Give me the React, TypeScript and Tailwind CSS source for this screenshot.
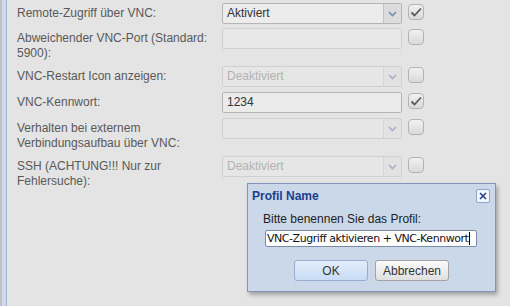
import React from 'react';

type Field =
  | { kind: 'combo'; value?: string; disabled?: boolean }
  | { kind: 'text'; value?: string; disabled?: boolean };

interface RowDef {
  label: string[];
  field: Field;
  checked: boolean;
  h: string;
}

const rows: RowDef[] = [
  { label: ['Remote-Zugriff über VNC:'], field: { kind: 'combo', value: 'Aktiviert' }, checked: true, h: 'h-[25px]' },
  { label: ['Abweichender VNC-Port (Standard:', '5900):'], field: { kind: 'text', disabled: true }, checked: false, h: 'h-[38px]' },
  { label: ['VNC-Restart Icon anzeigen:'], field: { kind: 'combo', value: 'Deaktiviert', disabled: true }, checked: false, h: 'h-[26px]' },
  { label: ['VNC-Kennwort:'], field: { kind: 'text', value: '1234' }, checked: true, h: 'h-[26px]' },
  { label: ['Verhalten bei externem', 'Verbindungsaufbau über VNC:'], field: { kind: 'combo', disabled: true }, checked: false, h: 'h-[38px]' },
  { label: ['SSH (ACHTUNG!!! Nur zur', 'Fehlersuche):'], field: { kind: 'combo', value: 'Deaktiviert', disabled: true }, checked: false, h: 'h-[38px]' },
];

function Chevron({ dim }: { dim?: boolean }) {
  return (
    <svg width="9" height="6" viewBox="0 0 9 6">
      <path d="M1 1l3.5 3.5L8 1" fill="none" stroke={dim ? '#a7b1c3' : '#7a8cb0'} strokeWidth="1.7" />
    </svg>
  );
}

function Checkbox({ checked }: { checked: boolean }) {
  return (
    <div className="w-[16px] h-[16px] rounded-[4px] border border-[#b3b3b3] bg-gradient-to-b from-[#f1f1f1] to-[#dadada] flex items-center justify-center">
      {checked && (
        <svg width="12" height="10" viewBox="0 0 12 10">
          <path d="M1.5 5.5l3 3L11 1.5" fill="none" stroke="#5a5a5a" strokeWidth="1.8" />
        </svg>
      )}
    </div>
  );
}

function Control({ field }: { field: Field }) {
  if (field.kind === 'combo') {
    return (
      <div
        className={`w-[180px] h-[21px] flex border rounded-[2px] ${
          field.disabled ? 'border-[#d0d0d0] bg-[#e6e6e6]' : 'border-[#b5b5b5] bg-[#ececec]'
        }`}
      >
        <div className={`flex-1 px-[4px] leading-[19px] text-[12px] ${field.disabled ? 'text-[#b3b3b3]' : 'text-[#333]'}`}>
          {field.value}
        </div>
        <div
          className={`w-[18px] flex items-center justify-center border-l ${
            field.disabled ? 'border-[#d6d6d6] bg-[#e2e2e2]' : 'border-[#c2c2c2] bg-[#dcdcdc]'
          }`}
        >
          <Chevron dim={field.disabled} />
        </div>
      </div>
    );
  }
  return (
    <div
      className={`w-[180px] h-[21px] border rounded-[2px] px-[4px] leading-[19px] text-[12px] text-[#333] ${
        field.disabled ? 'border-[#d0d0d0] bg-[#e7e7e7]' : 'border-[#b5b5b5] bg-[#ebebeb]'
      }`}
    >
      {field.value}
    </div>
  );
}

export default function App() {
  return (
    <div className="relative w-[510px] h-[306px] overflow-hidden bg-[#e4e4e4] flex font-['Liberation_Sans',Arial,sans-serif]">
      {/* left frame edge */}
      <div className="w-[7px] h-full border-l-2 border-[#b9c2cf] bg-[#d3d9e1] border-r border-r-[#a3b6d8]" />

      {/* settings rows */}
      <div className="flex flex-col pt-[3px] pl-[10px]">
        {rows.map((r, i) => (
          <div key={i} className={`flex items-start ${r.h}`}>
            <div className="w-[205px] pt-[3px] text-[12px] leading-[15px] text-[#595959] whitespace-nowrap">
              {r.label.map((l, j) => (
                <div key={j}>{l}</div>
              ))}
            </div>
            <Control field={r.field} />
            <div className="ml-[6px] mt-[1px]">
              <Checkbox checked={r.checked} />
            </div>
          </div>
        ))}
      </div>

      {/* dialog */}
      <div className="absolute left-[247px] top-[183px] w-[249px] h-[109px] border border-[#8195b6] bg-[#cbd8e9] shadow-[2px_3px_4px_rgba(0,0,0,0.28)] flex flex-col">
        <div className="flex items-center justify-between pl-[4px] pr-[5px] pt-[5px]">
          <span className="text-[12px] leading-[14px] font-bold text-[#1c3d8e]">Profil Name</span>
          <div className="w-[14px] h-[14px] rounded-[2px] border border-[#8ea6cc] bg-[#f3f6fb] flex items-center justify-center">
            <svg width="8" height="8" viewBox="0 0 8 8">
              <path d="M1 1l6 6M7 1L1 7" stroke="#213f8c" strokeWidth="1.5" />
            </svg>
          </div>
        </div>
        <div className="pl-[15px] mt-[9px] text-[12px] leading-[15px] text-[#222]">Bitte benennen Sie das Profil:</div>
        <div className="ml-[17px] mt-[3px] w-[212px] h-[17px] border border-[#7c8aa6] rounded-[2px] bg-white flex items-center px-[1px] overflow-hidden">
          <span className="font-['DejaVu_Sans',sans-serif] text-[11px] tracking-[-0.45px] text-[#111] whitespace-nowrap leading-[15px]">
            VNC-Zugriff aktivieren + VNC-Kennwort
          </span>
          <span className="w-px h-[13px] bg-black ml-[1px] shrink-0" />
        </div>
        <div className="flex justify-center gap-[7px] mt-[13px]">
          <div className="w-[74px] h-[21px] rounded-[3px] border border-[#97aed0] bg-gradient-to-b from-[#e3eefb] to-[#c8dcf4] flex items-center justify-center text-[12px] text-[#333]">
            OK
          </div>
          <div className="w-[74px] h-[21px] rounded-[3px] border border-[#a3a3a3] bg-gradient-to-b from-[#fbfbfb] to-[#e0e0e0] flex items-center justify-center text-[12px] text-[#333]">
            Abbrechen
          </div>
        </div>
      </div>
    </div>
  );
}
